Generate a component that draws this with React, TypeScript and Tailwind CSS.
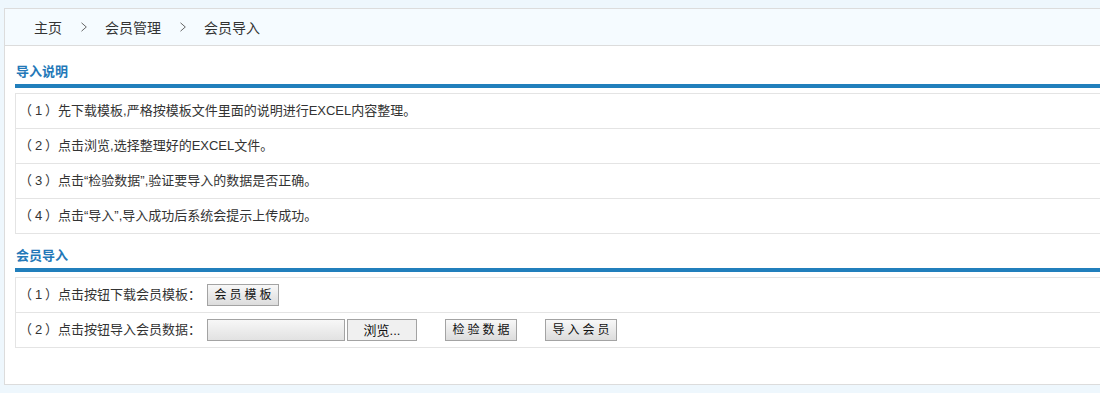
import React from "react";

const font = { fontFamily: '"Noto Sans CJK SC", "Liberation Sans", sans-serif' };
const rowFont = { fontFamily: '"Liberation Sans", "Noto Sans CJK SC", sans-serif' };

function Chevron() {
  return (
    <svg width="8" height="10" viewBox="0 0 8 10" className="shrink-0">
      <path d="M1.5 0.8 L6.3 5 L1.5 9.2" fill="none" stroke="#666" strokeWidth="1" />
    </svg>
  );
}

// numbered prefix like （1）, digit in a full-width cell
function Num({ n }: { n: number }) {
  return (
    <>
      （<span className="inline-block w-[13px] text-center">{n}</span>）
    </>
  );
}

function Btn({ children, className = "" }: { children: React.ReactNode; className?: string }) {
  return (
    <button
      className={
        "h-[22px] w-[72px] border border-[#a3a3a3] bg-gradient-to-b from-[#f8f8f8] to-[#dcdcdc] text-[12px] text-[#111] leading-none tracking-[3px] pl-[3px] " +
        className
      }
    >
      {children}
    </button>
  );
}

const tips = [
  "先下载模板,严格按模板文件里面的说明进行EXCEL内容整理。",
  "点击浏览,选择整理好的EXCEL文件。",
  "点击“检验数据”,验证要导入的数据是否正确。",
  "点击“导入”,导入成功后系统会提示上传成功。",
];

export default function App() {
  return (
    <div className="min-h-screen bg-[#eef7fd] pt-2 pl-1 overflow-hidden" style={font}>
      <div className="w-[1120px] h-[377px] border border-[#dcdcdc] bg-white">
        {/* breadcrumb */}
        <div className="h-[37px] bg-[#f5fbff] border-b border-[#dcdcdc] flex items-center pl-[29px] text-[14px] text-[#333]">
          <span>主页</span>
          <span className="ml-[18px] mr-[17px]"><Chevron /></span>
          <span>会员管理</span>
          <span className="ml-[18px] mr-[17px]"><Chevron /></span>
          <span>会员导入</span>
        </div>

        <div className="pl-[10px]">
          {/* 导入说明 */}
          <div className="h-[38px] flex items-end pb-[6px] pl-[1px]">
            <span className="text-[13px] leading-[14px] font-bold text-[#2378b8]">导入说明</span>
          </div>
          <div className="h-[4px] bg-[#217fbc]" />
          <div className="h-[5px]" />
          <div className="border-t border-l border-[#e4e4e4]">
            {tips.map((t, i) => (
              <div
                key={t}
                className="h-[35px] border-b border-[#e4e4e4] flex items-center pl-[3px] text-[13px] text-[#333]"
                style={rowFont}
              >
                <span>
                  <Num n={i + 1} />
                  {t}
                </span>
              </div>
            ))}
          </div>

          {/* 会员导入 */}
          <div className="h-[34px] flex items-end pb-[6px] pl-[1px]">
            <span className="text-[13px] leading-[14px] font-bold text-[#2378b8]">会员导入</span>
          </div>
          <div className="h-[4px] bg-[#217fbc]" />
          <div className="h-[5px]" />
          <div className="border-t border-l border-[#e4e4e4] text-[13px] text-[#333]" style={rowFont}>
            <div className="h-[35px] border-b border-[#e4e4e4] flex items-center pl-[3px]">
              <span className="w-[188px] shrink-0">
                <Num n={1} />点击按钮下载会员模板：
              </span>
              <Btn>会员模板</Btn>
            </div>
            <div className="h-[35px] border-b border-[#e4e4e4] flex items-center pl-[3px]">
              <span className="w-[188px] shrink-0">
                <Num n={2} />点击按钮导入会员数据：
              </span>
              <div className="h-[22px] w-[138px] border border-[#a3a3a3] bg-gradient-to-b from-[#f7f7f7] to-[#e2e2e2]" />
              <button className="ml-[2px] h-[22px] w-[70px] border border-[#a3a3a3] bg-[#f0f0f0] text-[13px] text-[#111] leading-none">
                浏览...
              </button>
              <Btn className="ml-[28px]">检验数据</Btn>
              <Btn className="ml-[28px]">导入会员</Btn>
            </div>
          </div>
        </div>
      </div>
    </div>
  );
}
